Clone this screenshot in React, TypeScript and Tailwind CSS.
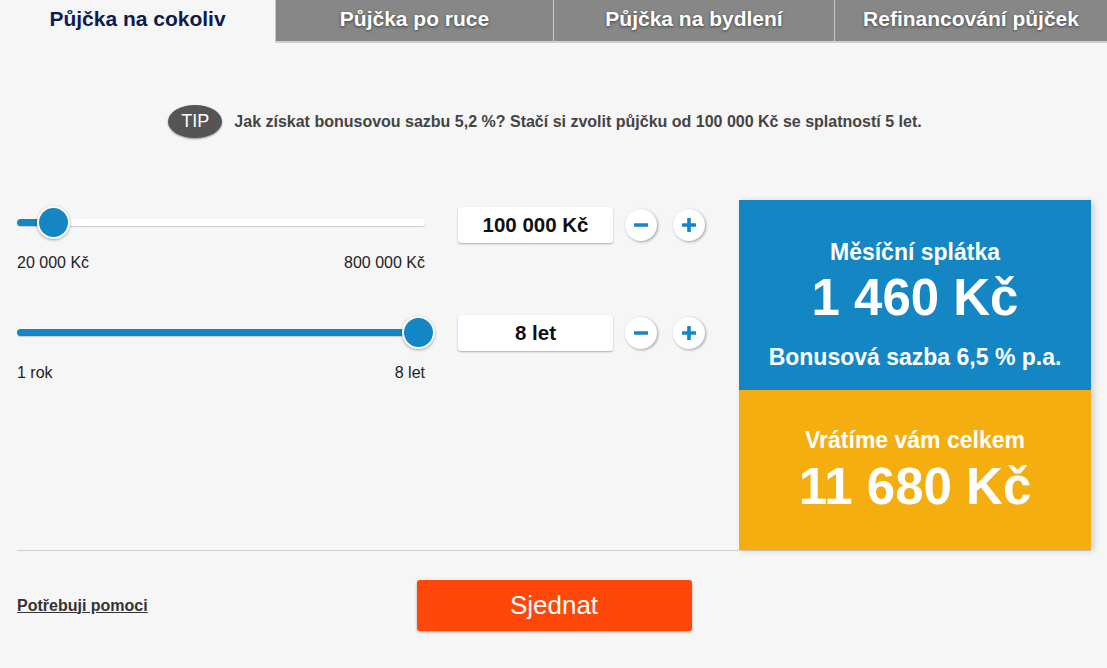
import React from "react";

const font = { fontFamily: '"Liberation Sans", Arial, sans-serif' };

function Slider({ pos, min, max }: { pos: number; min: string; max: string }) {
  return (
    <div className="w-[408px]">
      <div className="relative h-[33px] flex items-center">
        <div className="w-full h-[7px] rounded-full bg-white shadow-[0_1px_1px_rgba(0,0,0,0.18)]" />
        <div
          className="absolute left-0 h-[7px] rounded-full bg-[#1386c3]"
          style={{ width: pos }}
        />
        <div
          className="absolute top-0 w-[33px] h-[33px] rounded-full bg-[#1386c3] border-2 border-white shadow-[0_1px_3px_rgba(0,0,0,0.35)]"
          style={{ left: pos - 16.5 }}
        />
      </div>
      <div className="flex justify-between mt-[15px] text-[16px] leading-[18px] text-[#222]">
        <span>{min}</span>
        <span>{max}</span>
      </div>
    </div>
  );
}

function RoundBtn({ plus }: { plus?: boolean }) {
  return (
    <div className="w-[32px] h-[32px] rounded-full bg-white shadow-[1px_1px_3px_rgba(0,0,0,0.35)] flex items-center justify-center">
      <svg width="14" height="14" viewBox="0 0 14 14">
        <rect x="0" y="5.2" width="14" height="3.6" fill="#1386c3" rx="0.5" />
        {plus && <rect x="5.2" y="0" width="3.6" height="14" fill="#1386c3" rx="0.5" />}
      </svg>
    </div>
  );
}

function InputRow({ value }: { value: string }) {
  return (
    <div className="flex items-center">
      <div className="w-[155px] h-[36px] bg-white rounded-[3px] shadow-[0_1px_2px_rgba(0,0,0,0.3)] flex items-center justify-center text-[20.5px] font-bold text-[#111]">
        {value}
      </div>
      <div className="ml-[12px]">
        <RoundBtn />
      </div>
      <div className="ml-[16px]">
        <RoundBtn plus />
      </div>
    </div>
  );
}

export default function App() {
  const tabs = ["Půjčka po ruce", "Půjčka na bydlení", "Refinancování půjček"];
  return (
    <div className="min-h-[668px] bg-[#f6f6f6]" style={font}>
      {/* Tabs */}
      <div className="grid grid-cols-[275px_278px_281px_1fr] h-[43px]">
        <div className="flex items-center justify-center pb-[5px] text-[21px] font-bold text-[#0d1b4f]">
          Půjčka na cokoliv
        </div>
        {tabs.map((t) => (
          <div
            key={t}
            className="flex items-center justify-center pb-[4px] bg-[#878787] border-l border-[#c8c8c8] border-b-2 border-b-[#cfcfcf] text-[21px] font-bold text-white [text-shadow:0_1px_3px_rgba(0,0,0,0.55)]"
          >
            {t}
          </div>
        ))}
      </div>

      {/* Tip */}
      <div className="flex items-center justify-center pr-[17px] mt-[62px]">
        <div className="w-[54px] h-[33px] rounded-[50%] bg-[#555] shadow-[0_1px_2px_rgba(0,0,0,0.4)] flex items-center justify-center text-white text-[18px]">
          TIP
        </div>
        <div className="ml-[12px] text-[16px] font-bold text-[#444]">
          Jak získat bonusovou sazbu 5,2 %? Stačí si zvolit půjčku od 100 000 Kč se splatností 5 let.
        </div>
      </div>

      {/* Calculator */}
      <div className="mx-[17px] mr-[16px] mt-[62px] flex border-b border-[#d0d0d0]">
        <div className="flex-1 pt-[6px]">
          <div className="flex items-start">
            <Slider pos={36} min="20 000 Kč" max="800 000 Kč" />
            <div className="ml-[33px] mt-[1px]">
              <InputRow value="100 000 Kč" />
            </div>
          </div>
          <div className="flex items-start mt-[44px]">
            <Slider pos={401} min="1 rok" max="8 let" />
            <div className="ml-[33px] -mt-[1px]">
              <InputRow value="8 let" />
            </div>
          </div>
        </div>
        <div className="w-[352px] shadow-[3px_1px_6px_rgba(0,0,0,0.15)] text-white font-bold text-center">
          <div className="h-[190px] bg-[#1386c3] pt-[39px] flex flex-col items-center">
            <div className="text-[23px] leading-[26px]">Měsíční splátka</div>
            <div className="text-[51px] leading-[56px] mt-[5px]">1 460 Kč</div>
            <div className="text-[23px] leading-[26px] mt-[18px]">Bonusová sazba 6,5 % p.a.</div>
          </div>
          <div className="h-[160px] bg-[#f4ae0f] pt-[37px] flex flex-col items-center">
            <div className="text-[23px] leading-[26px]">Vrátíme vám celkem</div>
            <div className="text-[51px] leading-[56px] mt-[6px]">11 680 Kč</div>
          </div>
        </div>
      </div>

      {/* Bottom */}
      <div className="mx-[17px] mr-[16px] mt-[29px] grid grid-cols-[1fr_275px_1fr] items-center">
        <a className="text-[16px] font-bold text-[#333] underline justify-self-start">Potřebuji pomoci</a>
        <button className="h-[51px] w-[275px] rounded-[3px] bg-[#ff4709] text-white text-[26px] shadow-[0_1px_3px_rgba(0,0,0,0.3)]">
          Sjednat
        </button>
        <div />
      </div>
    </div>
  );
}
